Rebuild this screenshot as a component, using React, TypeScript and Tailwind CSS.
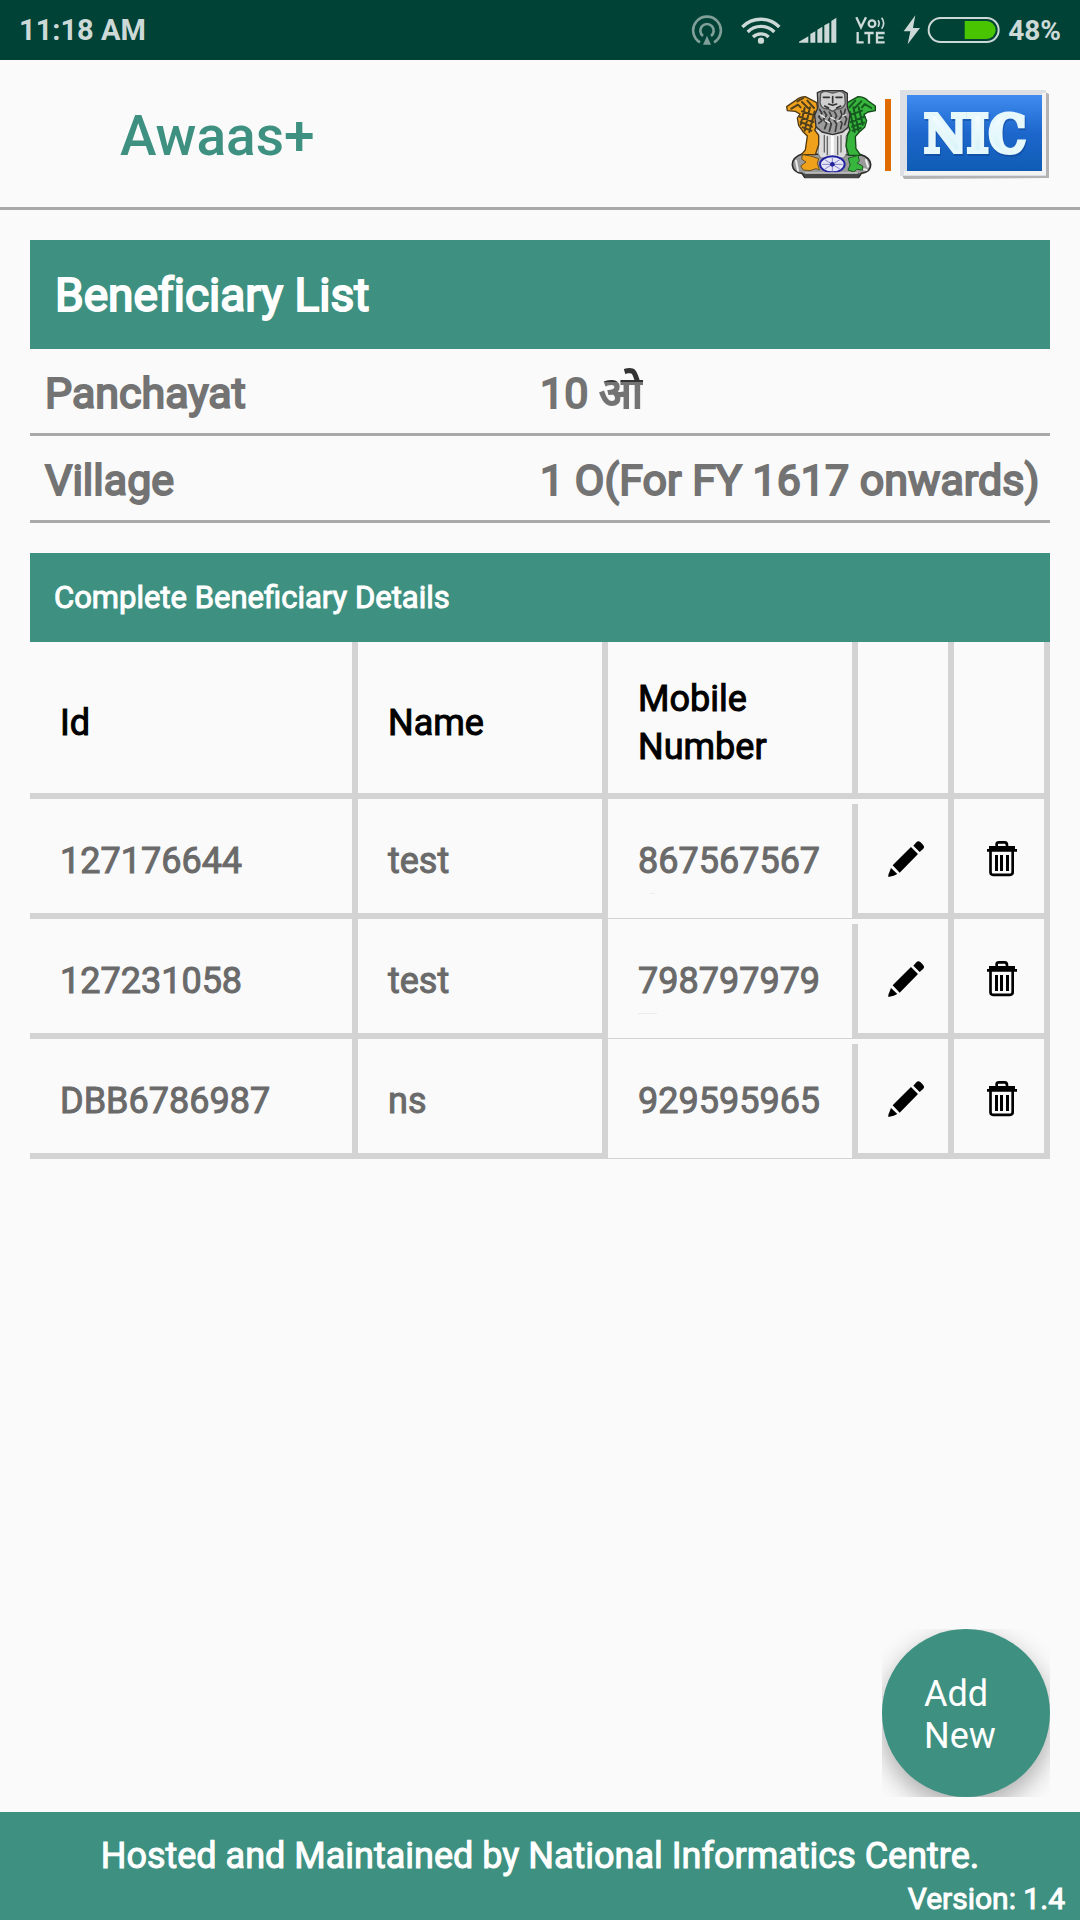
import React from "react";

const beneficiaries = [
  { id: "127176644", name: "test", mobile: "867567567", markClass: "ml-[12px] h-px w-[5px] bg-[#ececec]" },
  { id: "127231058", name: "test", mobile: "798797979", markClass: "h-px w-[19px] bg-[#ececec]" },
  { id: "DBB6786987", name: "ns", mobile: "929595965", markClass: "h-px w-px" },
];

function HotspotIcon() {
  return (
    <svg width="32" height="30" viewBox="36 43 96 90" fill="none" stroke="#7f9f98" strokeWidth="8" aria-hidden="true">
      <path d="M63 125 A41.500 41.500 0 1 1 105 125" />
      <path d="M72 106 A20 20 0 1 1 96 106" />
      <path d="M84 105 L96 132 H72 Z" fill="#7f9f98" stroke="none" />
    </svg>
  );
}

function WifiIcon() {
  return (
    <svg width="40" height="30" viewBox="180 43 120 90" fill="none" stroke="#ccd9d6" strokeWidth="10" aria-hidden="true">
      <path d="M184 79 A78 78 0 0 1 295 79" />
      <path d="M200 94 A56 56 0 0 1 280 94" />
      <path d="M216 109 A34 34 0 0 1 263 109" />
      <circle cx="240" cy="120" r="9.500" fill="#ccd9d6" stroke="none" />
    </svg>
  );
}

function SignalIcon() {
  return (
    <svg width="38" height="26" viewBox="350 52 114 78" fill="#ccd9d6" aria-hidden="true">
      <path d="M350 129 V126 L378 110 V129Z M384 129 V103 L399 95 V129Z M405 129 V90 L420 81 V129Z M426 129 V77 L441 69 V129Z M447 129 V64 L462 54 V129Z" />
    </svg>
  );
}

function VolteIcon() {
  return (
    <svg width="30" height="28" viewBox="521 49 90 84" fill="none" stroke="#ccd9d6" strokeWidth="7" aria-hidden="true">
      <path d="M525 53 L539 83 L554 53" />
      <circle cx="572" cy="72" r="10" />
      <path d="M590 62 Q597 71 590 81" strokeWidth="5" />
      <path d="M601 54 Q613 71 601 87" strokeWidth="5" />
      <path d="M529 97 V128 H547 M549 100 H577 M563 100 V132 M610 100 H587 V128 H610 M587 114 H607" />
    </svg>
  );
}

function BatteryIcon() {
  return (
    <svg width="98" height="30" viewBox="670 45 294 90" aria-hidden="true">
      <path d="M707 46 L672 94 H692 L684 133 L721 84 H700 Z" fill="#ccd9d6" />
      <rect x="747" y="54" width="210" height="72" rx="36" fill="none" stroke="#ccd9d6" strokeWidth="6" />
      <path d="M855 63 H921 A27 27 0 0 1 921 117 H855Z" fill="#48c400" />
    </svg>
  );
}

function Emblem() {
  return (
    <svg width="90" height="90" viewBox="48 60 270 270" role="img" aria-label="State Emblem of India" strokeLinejoin="round" strokeLinecap="round">
      <path d="M96 252 Q66 262 67 285 Q70 308 96 310 L104 322 H266 L274 310 Q302 306 302 284 Q300 262 272 254 Z" fill="#9a9a9a" stroke="#2c2c2c" strokeWidth="5" />
      <path d="M132 178 L146 200 L144 250 L152 264 H222 L230 250 L228 200 L240 178Z" fill="#dcdcdc" stroke="#777" strokeWidth="3" />
      <path d="M163 196 V246 M172 200 V254 M203 200 V254 M213 196 V246" stroke="#666" strokeWidth="4" />
      <path d="M187 194 V256" stroke="#fff" strokeWidth="9" />
      <path d="M140 98 L106 80 Q90 80 76 92 L50 110 L52 122 L76 124 L90 132 L82 144 L86 166 L100 186 L112 198 L106 240 L94 254 H136 L146 224 V196 L134 180 L148 150 Z" fill="#f0a11c" stroke="#4f3a12" strokeWidth="4" />
      <path d="M232 98 L264 80 Q282 80 294 92 L316 108 V122 L294 126 L282 134 L290 152 L284 172 L268 186 L256 200 L258 236 L272 256 H236 L228 228 L232 196 L240 180 L228 150Z" fill="#38b53c" stroke="#14491a" strokeWidth="4" />
      <path d="M64 116 L84 104 L92 112 M96 96 L114 114 M112 92 L132 114 M96 124 L134 136 M88 140 L130 156 M92 156 L126 170 M98 172 L124 182 M104 114 L92 164 M120 112 L104 182 M134 124 L118 186 M82 94 L100 84" fill="none" stroke="#50401c" strokeWidth="6" />
      <path d="M304 114 L284 102 L276 112 M274 94 L254 114 M256 92 L238 112 M276 122 L238 136 M284 140 L242 156 M282 158 L246 170 M272 174 L248 182 M266 112 L278 164 M250 112 L266 182 M240 126 L254 186" fill="none" stroke="#155a20" strokeWidth="6" />
      <path d="M142 68 L158 62 H218 L232 70 V112 L240 134 L234 172 L218 186 L188 194 L156 186 L138 170 L134 136 L144 112Z" fill="#9c9c9c" stroke="#303030" strokeWidth="4" />
      <path d="M152 70 Q162 60 176 66 Q188 72 200 66 Q214 60 224 72 L226 100 Q218 120 202 116 L188 124 L172 116 Q154 118 150 98Z" fill="#cfcfcf" stroke="#555" strokeWidth="4" />
      <path d="M160 82 H178 M198 82 H216 M188 80 V98 M176 102 L188 106 L200 102 M164 108 L176 114 M212 108 L200 114" fill="none" stroke="#333" strokeWidth="5" />
      <path d="M148 118 L156 130 L146 140 L156 152 L146 160 M162 124 L170 136 L160 148 L170 160 L164 176 M178 126 L184 138 L176 150 L184 162 L178 184 M194 126 L200 138 L192 150 L200 162 L196 184 M212 122 L216 136 L208 148 L216 160 L212 176 M226 118 L222 134 L230 146 L224 164" fill="none" stroke="#3b3b3b" strokeWidth="5" />
      <path d="M150 134 L164 142 M166 152 L178 158 M182 142 L194 148 M202 154 L212 150 M218 138 L228 134" stroke="#e8e8e8" strokeWidth="4" />
      <path d="M98 254 L122 258 L146 266 L142 280 L148 300 L138 296 L120 302 L100 300 L92 288 L108 276 L96 268Z" fill="#f0a11c" stroke="#6b5220" strokeWidth="3" />
      <path d="M236 264 L264 256 L268 272 L262 280 L278 288 V300 L260 298 L252 306 L234 300 L240 286Z" fill="#38b53c" stroke="#1b5c22" strokeWidth="3" />
      <path d="M78 272 L84 302 M288 270 L294 290 M282 298 L290 300" stroke="#eee" strokeWidth="6" />
      <ellipse cx="187" cy="283" rx="37" ry="24" fill="#e6e6f6" stroke="#2424a0" strokeWidth="6" />
      <path d="M187 264 V302 M158 283 H216 M166 270 L208 296 M208 270 L166 296" stroke="#8484cc" strokeWidth="3" />
      <circle cx="187" cy="283" r="7" fill="#22229a" />
      <path d="M100 310 H270 L264 324 H106Z" fill="#454545" />
      <path d="M106 309 H262" stroke="#c4c4c4" strokeWidth="4" />
    </svg>
  );
}

function NicLogo() {
  return (
    <svg width="150" height="90" viewBox="0 0 150 90" role="img" aria-label="NIC">
      <defs>
        <linearGradient id="nic-blue" x1="0" y1="0" x2="0" y2="1">
          <stop offset="0" stopColor="#3f8bef" />
          <stop offset="0.5" stopColor="#1d67cc" />
          <stop offset="1" stopColor="#0f5cb4" />
        </linearGradient>
        <linearGradient id="nic-white" x1="0" y1="0" x2="0" y2="1">
          <stop offset="0" stopColor="#ffffff" />
          <stop offset="1" stopColor="#cdf0f8" />
        </linearGradient>
      </defs>
      <path d="M2 85 H145 V2 L149 4 V88 L4 89Z" fill="#b3b3b3" />
      <rect x="0" y="0" width="146" height="86" fill="#dcdfe3" />
      <path d="M4 83 H144 V3" fill="none" stroke="#f3f3f3" strokeWidth="4" />
      <rect x="7" y="5" width="135" height="76" fill="url(#nic-blue)" />
      <text x="76" y="64" textAnchor="middle" fontSize="52" fontWeight="700" fontFamily="'DejaVu Serif Condensed', 'DejaVu Serif', serif" fill="#0b3f8c" stroke="#0b3f8c" strokeWidth="4" opacity="0.45">NIC</text>
      <text x="75" y="62" textAnchor="middle" fontSize="52" fontWeight="700" fontFamily="'DejaVu Serif Condensed', 'DejaVu Serif', serif" fill="url(#nic-white)" stroke="#e6f8fc" strokeWidth="4">NIC</text>
    </svg>
  );
}

function PencilIcon() {
  return (
    <svg width="36" height="36" viewBox="0 0 108 108" aria-hidden="true">
      <path d="M76 14 L85 4 Q90 -2 97 3 L105 11 Q111 18 106 23 L95 33Z M69 18 L90 39 L35 95 L14 73Z M9 81 L28 99 L17 104 L1 108 V101Z" />
    </svg>
  );
}

function TrashIcon() {
  return (
    <svg width="36" height="36" viewBox="-9 0 108 108" aria-hidden="true">
      <path d="M29 17 V9 Q29 4 36 4 H53 Q60 4 60 13 V17" fill="none" stroke="#000" strokeWidth="8" />
      <path d="M6 15 H84 V24 H90 V32 H0 V24 H6Z" />
      <path d="M10.500 28 V94 Q10.500 101.500 18 101.500 H69 Q77 101.500 77 94 V28" fill="none" stroke="#000" strokeWidth="8" />
      <path d="M24 42 H33 V90 H24Z M39 42 H48 V90 H39Z M57 42 H66 V90 H57Z" />
    </svg>
  );
}

export default function App() {
  return (
    <div className="flex min-h-screen flex-col bg-[#fafafa] font-['Roboto','Noto_Sans',sans-serif]">
      <div className="flex h-[60px] shrink-0 items-center justify-between bg-[#004236] px-[19px] text-[29px] font-bold text-[#ccd9d6]">
        <span className="pt-0.5">11:18 AM</span>
        <div className="flex items-center">
          <div className="flex items-center gap-[18px]">
            <HotspotIcon />
            <WifiIcon />
            <SignalIcon />
            <VolteIcon />
            <BatteryIcon />
          </div>
          <span className="pt-0.5 pl-[7px] text-[28px]">48%</span>
        </div>
      </div>

      <header className="flex h-[150px] shrink-0 items-center justify-between border-b-3 border-[#a9a9a9] pt-[3px] pr-[30px] pl-[120px]">
        <h1 className="pt-0.5 text-[55px] font-medium text-[#3e9181]">Awaas+</h1>
        <div className="flex items-center gap-[9px]">
          <Emblem />
          <div className="h-[72px] w-[6px] bg-[#dd6b00]" />
          <NicLogo />
        </div>
      </header>

      <main className="flex flex-1 flex-col px-[30px] pt-[30px] pb-[15px]">
        <h2 className="flex h-[109px] items-center bg-[#3e9181] px-[25px] pt-0.5 text-[46px] text-white [-webkit-text-stroke:2px] [font-variant-ligatures:none]">
          Beneficiary List
        </h2>
        <dl className="text-[43px] leading-[80px] text-[#737373] [-webkit-text-stroke:2px]">
          <div className="grid h-[87px] grid-cols-2 border-b-3 border-[#a9a9a9] pt-1">
            <dt className="h-20 pl-[15px]">Panchayat</dt>
            <dd className="h-20">
              10{" "}
              <span className="bg-[linear-gradient(#333333_28%,#737373_28%)] bg-clip-text text-transparent">ओ</span>
            </dd>
          </div>
          <div className="grid h-[87px] grid-cols-2 border-b-3 border-[#a9a9a9] pt-1 whitespace-nowrap">
            <dt className="h-20 pl-[15px]">Village</dt>
            <dd className="h-20">1 O(For FY 1617 onwards)</dd>
          </div>
        </dl>

        <h3 className="mt-[30px] flex h-[89px] items-center bg-[#3e9181] px-6 pt-0.5 text-[31px] text-white [-webkit-text-stroke:1px]">
          Complete Beneficiary Details
        </h3>
        <table className="w-full table-fixed border-separate border-spacing-0 text-left text-[36px] [-webkit-text-stroke:1px]">
          <colgroup>
            <col />
            <col className="w-[250px]" />
            <col className="w-[250px]" />
            <col className="w-[96px]" />
            <col className="w-[96px]" />
          </colgroup>
          <thead className="leading-[48px] text-black">
            <tr className="h-[157px]">
              <th scope="col" className="border-r-6 border-b-6 border-[#d3d3d3] pt-2.5 pl-[30px] font-normal">Id</th>
              <th scope="col" className="border-r-6 border-b-6 border-[#d3d3d3] pt-2.5 pl-[30px] font-normal">Name</th>
              <th scope="col" className="border-r-6 border-b-6 border-[#d3d3d3] pt-2.5 pl-[30px] font-normal">Mobile Number</th>
              <td className="border-r-6 border-b-6 border-[#d3d3d3]" />
              <td className="border-r-6 border-b-6 border-[#d3d3d3]" />
            </tr>
          </thead>
          <tbody className="text-[#6a6a6a]">
            {beneficiaries.map((b) => (
              <tr key={b.id} className="h-[120px]">
                <td className="border-r-6 border-b-6 border-[#d3d3d3] pt-2.5 pl-[30px]">{b.id}</td>
                <td className="border-r-6 border-b-6 border-[#d3d3d3] pt-2.5 pl-[30px]">{b.name}</td>
                <td className="border-b border-[#d3d3d3] p-0 pt-[5px]">
                  <div className="h-[114px] border-r-6 border-[#d3d3d3] pt-[33px] pl-[30px]">
                    <div className="h-14 leading-[48px]">{b.mobile}</div>
                    <div className={b.markClass} />
                  </div>
                </td>
                <td className="border-r-6 border-b-6 border-[#d3d3d3] pt-1.5 pl-[30px]">
                  <button type="button" aria-label={"Edit " + b.id} className="block">
                    <PencilIcon />
                  </button>
                </td>
                <td className="border-r-6 border-b-6 border-[#d3d3d3] pt-1.5 pl-[30px]">
                  <button type="button" aria-label={"Delete " + b.id} className="block">
                    <TrashIcon />
                  </button>
                </td>
              </tr>
            ))}
          </tbody>
        </table>

        <div className="mt-auto self-end overflow-hidden">
          <button type="button" className="block size-[168px] rounded-full bg-[#3e9181] pt-1 pr-10 pl-[42px] text-left text-[36px] leading-[42px] text-white shadow-[0_10px_26px_rgba(0,0,0,0.32)]">
            Add New
          </button>
        </div>
      </main>

      <footer className="flex h-[108px] shrink-0 flex-col bg-[#3e9181] px-[15px] pt-6 text-white [-webkit-text-stroke:1px]">
        <p className="text-center text-[36px] leading-[40px]">Hosted and Maintained by National Informatics Centre.</p>
        <p className="text-right text-[30px] leading-[46px]">Version: 1.4</p>
      </footer>
    </div>
  );
}
